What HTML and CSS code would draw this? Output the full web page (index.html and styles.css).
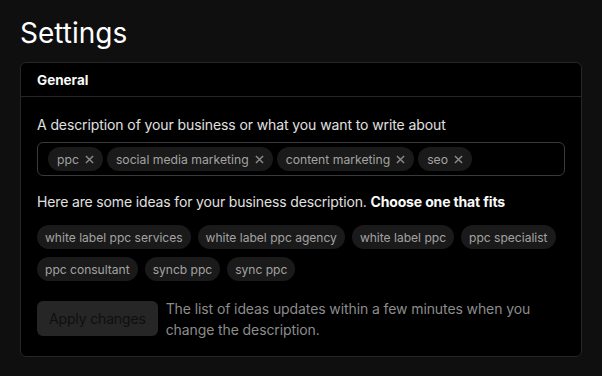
FILE: index.html
```html
<!DOCTYPE html>
<html>
<head>
<meta charset="utf-8">
<link rel="stylesheet" href="styles.css">
</head>
<body>
<main class="page">
  <h1 class="title">Settings</h1>
  <section class="card">
    <header class="card-header">General</header>
    <div class="card-body">
      <label class="label">A description of your business or what you want to write about</label>
      <div class="tag-input">
        <span class="tag">ppc <svg class="x" viewBox="0 0 10 10"><path d="M1 1L9 9M9 1L1 9"/></svg></span>
        <span class="tag">social media marketing <svg class="x" viewBox="0 0 10 10"><path d="M1 1L9 9M9 1L1 9"/></svg></span>
        <span class="tag">content marketing <svg class="x" viewBox="0 0 10 10"><path d="M1 1L9 9M9 1L1 9"/></svg></span>
        <span class="tag">seo <svg class="x" viewBox="0 0 10 10"><path d="M1 1L9 9M9 1L1 9"/></svg></span>
      </div>
      <p class="ideas-intro">Here are some ideas for your business description. <strong>Choose one that fits</strong></p>
      <div class="ideas">
        <span class="chip">white label ppc services</span>
        <span class="chip">white label ppc agency</span>
        <span class="chip">white label ppc</span>
        <span class="chip">ppc specialist</span>
        <span class="chip">ppc consultant</span>
        <span class="chip">syncb ppc</span>
        <span class="chip">sync ppc</span>
      </div>
      <div class="actions">
        <button class="apply" disabled>Apply changes</button>
        <p class="hint">The list of ideas updates within a few minutes when you change the description.</p>
      </div>
    </div>
  </section>
</main>
</body>
</html>
```
FILE: styles.css
```css
* { box-sizing: border-box; }
html, body { margin: 0; padding: 0; background: #0f0f0f; }
body {
  font-family: Inter, "Noto Sans", sans-serif;
  color: #e6e6e6;
}
.page { padding: 15px 20px 20px 20px; }
.title {
  margin: 0;
  font-size: 28px;
  font-weight: 400;
  line-height: 36px;
  color: #ffffff;
}
.card {
  margin-top: 11px;
  background: #000;
  border: 1px solid #262626;
  border-radius: 6px;
}
.card-header {
  height: 34px;
  padding: 0 16px;
  display: flex;
  align-items: center;
  font-size: 13.5px;
  font-weight: 700;
  color: #fafafa;
  border-bottom: 1px solid #262626;
}
.card-body {
  padding: 18px 16px 16px 16px;
  display: flex;
  flex-direction: column;
}
.label {
  font-size: 14px;
  line-height: 20px;
  letter-spacing: -0.1px;
  color: #e0e0e0;
}
.tag-input {
  margin-top: 7px;
  border: 1px solid #3a3a3a;
  border-radius: 6px;
  padding: 4px 10px;
  display: flex;
  flex-wrap: wrap;
  gap: 4px;
}
.tag {
  height: 24px;
  display: inline-flex;
  align-items: center;
  gap: 6px;
  padding: 0 9px;
  border-radius: 12px;
  background: #1a1a1a;
  color: #a3a3a3;
  font-size: 12.2px;
}
.x {
  width: 9px;
  height: 9px;
  fill: none;
  stroke: #8a8a8a;
  stroke-width: 1.6;
}
.ideas-intro {
  margin: 16px 0 0 0;
  font-size: 14px;
  line-height: 20px;
  letter-spacing: -0.15px;
  color: #e0e0e0;
}
.ideas-intro strong { color: #fafafa; font-weight: 700; }
.ideas {
  margin-top: 13px;
  display: flex;
  flex-wrap: wrap;
  gap: 8px 7px;
}
.chip {
  height: 24px;
  display: inline-flex;
  align-items: center;
  padding: 0 8px;
  border-radius: 12px;
  background: #1a1a1a;
  color: #a3a3a3;
  font-size: 12.05px;
}
.actions {
  margin-top: 20px;
  display: flex;
  align-items: flex-start;
  gap: 8px;
}
.apply {
  flex: none;
  height: 35px;
  padding: 0 12px;
  border: none;
  border-radius: 6px;
  background: #262626;
  color: #0f0f0f;
  font-family: inherit;
  font-size: 14px;
  letter-spacing: -0.15px;
}
.hint {
  margin: -2px 0 0 0;
  font-size: 14px;
  line-height: 20.5px;
  letter-spacing: -0.1px;
  color: #8c8c8c;
}
```
